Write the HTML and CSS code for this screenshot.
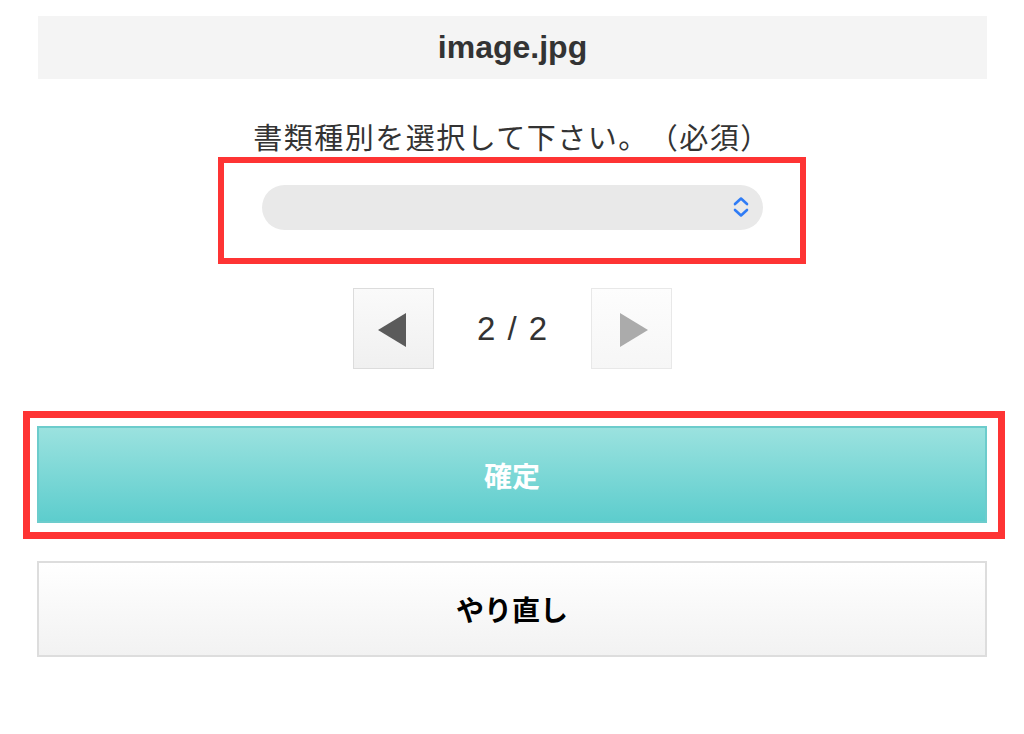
FILE: index.html
```html
<!DOCTYPE html>
<html lang="ja">
<head>
  <meta charset="UTF-8" />
  <meta name="viewport" content="width=device-width, initial-scale=1.0"/>
  <title>書類アップロード</title>
  <link rel="stylesheet" href="styles.css">
</head>
<body>
  <div class="container">
    <div class="file-name">image.jpg</div>

    <p class="select-label">書類種別を選択して下さい。（必須）</p>
    <div class="mark">
      <div class="select-wrap">
        <select id="doc-type" class="doc-select">
          <option value=""></option>
          <option value="license">運転免許証</option>
          <option value="insurance">健康保険証</option>
        </select>
        <svg class="select-arrow" width="18" height="24" viewBox="0 0 18 24">
          <polyline points="3,9 9,3.5 15,9" fill="none" stroke="#2f7cf6" stroke-width="2.6" stroke-linecap="round" stroke-linejoin="round"/>
          <polyline points="3,15 9,20.5 15,15" fill="none" stroke="#2f7cf6" stroke-width="2.6" stroke-linecap="round" stroke-linejoin="round"/>
        </svg>
      </div>
    </div>

    <div class="pager">
      <button type="button" class="pager-btn">
        <svg width="80" height="80" viewBox="0 0 80 80">
          <polygon points="24,41 52,24 52,58" fill="#5b5b5b"/>
        </svg>
      </button>
      <span class="pager-count">2 / 2</span>
      <button type="button" class="pager-btn disabled" disabled>
        <svg width="80" height="80" viewBox="0 0 80 80">
          <polygon points="28,24 28,58 56,41" fill="#ababab"/>
        </svg>
      </button>
    </div>

    <div class="mark mark-wide">
      <button type="button" class="btn-confirm">確定</button>
    </div>

    <button type="button" class="btn-retry">やり直し</button>
  </div>
</body>
</html>
```

FILE: styles.css
```css
body { margin: 0; background: #fff; font-family: "Liberation Sans", "Noto Sans CJK JP", sans-serif; color: #333; }
.container { padding: 16px 37px 40px 37px; }

.file-name {
  height: 63px;
  line-height: 63px;
  background: #f4f4f4;
  text-align: center;
  font-size: 32px;
  font-weight: bold;
  color: #333;
  margin-left: 1px;
}

.select-label {
  margin: 42px 0 0 0;
  line-height: 36px;
  font-size: 29px;
  letter-spacing: 1.5px;
  text-spacing-trim: space-all;
  text-align: center;
  color: #333;
}

/* red annotation frames */
.mark {
  box-sizing: border-box;
  width: 588px;
  margin: 0 auto;
  border: 6px solid #fe3434;
  padding: 22px 0 28px 0;
  display: flex;
  justify-content: center;
}
.mark-wide {
  width: auto;
  margin: 42px -18px 0 -14px;
  border-width: 7px;
  padding: 8px 11px 9px 7px;
  display: block;
}

.select-wrap { position: relative; width: 501px; height: 45px; }
.doc-select {
  -webkit-appearance: none;
  appearance: none;
  width: 100%;
  height: 45px;
  border: none;
  border-radius: 23px;
  background: #e9e9e9;
  font-size: 20px;
  padding: 0 20px;
}
.select-arrow { position: absolute; right: 13px; top: 10px; pointer-events: none; }

.pager {
  margin-top: 24px;
  display: flex;
  justify-content: center;
  align-items: center;
}
.pager-btn {
  width: 81px;
  height: 81px;
  padding: 0;
  border: 1px solid #dcdcdc;
  background: linear-gradient(#fafafa, #f0f0f0);
  cursor: pointer;
}
.pager-btn svg { display: block; }
.pager-btn.disabled { border-color: #e8e8e8; background: linear-gradient(#fdfdfd, #f6f6f6); cursor: default; }
.pager-count {
  width: 157px;
  text-align: center;
  font-size: 33px;
  word-spacing: 3px;
  color: #333;
}

.btn-confirm {
  display: block;
  width: 100%;
  height: 97px;
  border: 2px solid #6ccccc;
  background: linear-gradient(#9be2df, #5dcdcd);
  color: #fff;
  font-family: "Noto Sans CJK JP", sans-serif;
  font-size: 28px;
  font-weight: bold;
  cursor: pointer;
}

.btn-retry {
  display: block;
  width: 100%;
  height: 96px;
  margin-top: 22px;
  border: 2px solid #dddddd;
  background: linear-gradient(#ffffff, #f2f2f2);
  color: #000;
  font-family: "Noto Sans CJK JP", sans-serif;
  font-size: 28px;
  font-weight: bold;
  cursor: pointer;
}
```
